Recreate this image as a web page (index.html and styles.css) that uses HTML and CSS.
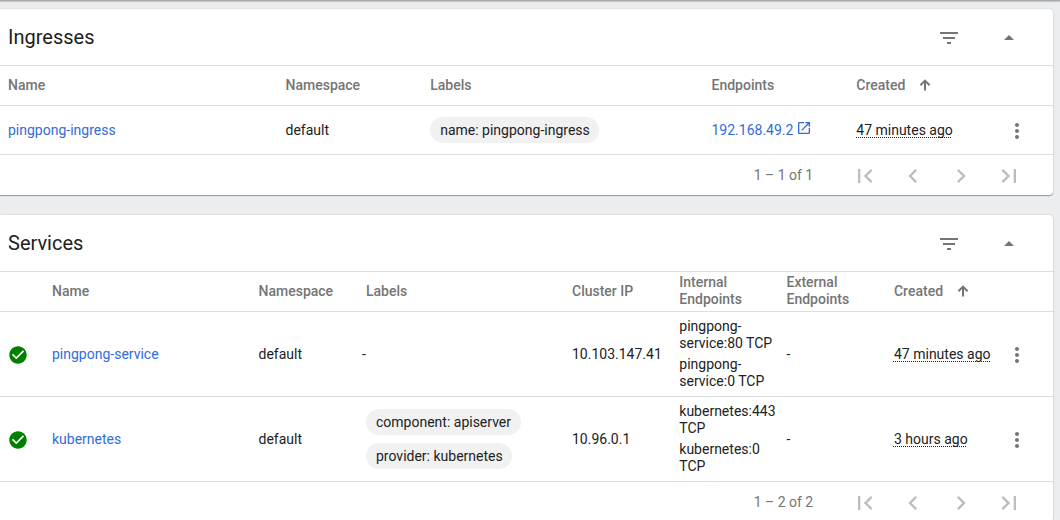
FILE: index.html
```html
<!DOCTYPE html>
<html lang="en">
<head>
<meta charset="utf-8">
<title>Ingresses and Services</title>
<link rel="stylesheet" href="styles.css">
</head>
<body>
<svg class="sprite" width="0" height="0">
  <symbol id="filter" viewBox="0 0 24 24"><path d="M10 18h4v-2h-4v2zM3 6v2h18V6H3zm3 7h12v-2H6v2z"/></symbol>
  <symbol id="up" viewBox="0 0 24 24"><path d="M7 14l5-5 5 5z"/></symbol>
  <symbol id="more" viewBox="0 0 24 24"><path d="M12 8c1.1 0 2-.9 2-2s-.9-2-2-2-2 .9-2 2 .9 2 2 2zm0 2c-1.1 0-2 .9-2 2s.9 2 2 2 2-.9 2-2-.9-2-2-2zm0 6c-1.1 0-2 .9-2 2s.9 2 2 2 2-.9 2-2-.9-2-2-2z"/></symbol>
  <symbol id="first" viewBox="0 0 24 24"><path d="M18.41 16.59L13.82 12l4.59-4.59L17 6l-6 6 6 6zM6 6h2v12H6z"/></symbol>
  <symbol id="prev" viewBox="0 0 24 24"><path d="M15.41 7.41L14 6l-6 6 6 6 1.41-1.41L10.83 12z"/></symbol>
  <symbol id="next" viewBox="0 0 24 24"><path d="M10 6L8.59 7.41 13.17 12l-4.58 4.59L10 18l6-6z"/></symbol>
  <symbol id="last" viewBox="0 0 24 24"><path d="M5.59 7.41L10.18 12l-4.59 4.59L7 18l6-6-6-6zM16 6h2v12h-2z"/></symbol>
  <symbol id="open" viewBox="0 0 24 24"><path d="M19 19H5V5h7V3H5c-1.11 0-2 .9-2 2v14c0 1.1.89 2 2 2h14c1.1 0 2-.9 2-2v-7h-2v7zM14 3v2h3.590l-9.830 9.830 1.410 1.410L19 6.410V10h2V3h-7z"/></symbol>
  <symbol id="check" viewBox="0.5 0.5 23 23"><path d="M12 2C6.480 2 2 6.480 2 12s4.480 10 10 10 10-4.480 10-10S17.520 2 12 2zm-2 15l-5-5 1.410-1.410L10 14.170l7.590-7.590L19 8l-9 9z"/></symbol>
  <symbol id="sort" viewBox="0 0 12 12"><path d="M5 11.500V4L2.100 6.900.7 5.500 6 .2l5.300 5.300-1.400 1.400L7 4v7.500z"/></symbol>
</svg>
<div class="toolbar-edge"></div>
<main class="content">
  <section class="card">
    <header class="card-header">
      <h2 class="card-title">Ingresses</h2>
      <svg class="icon filter-icon"><use href="#filter"/></svg>
      <svg class="icon"><use href="#up"/></svg>
    </header>
    <div class="row head ingress-row">
      <div>Name</div><div>Namespace</div><div>Labels</div><div>Endpoints</div>
      <div class="sorted">Created<svg class="sort-icon"><use href="#sort"/></svg></div><div></div>
    </div>
    <div class="row ingress-row ingress-body">
      <div><a class="link">pingpong-ingress</a></div>
      <div>default</div>
      <div class="chips"><span class="chip">name: pingpong-ingress</span></div>
      <div class="endpoint"><a class="link">192.168.49.2</a><svg class="open-icon"><use href="#open"/></svg></div>
      <div><span class="age">47 minutes ago</span></div>
      <svg class="icon menu-icon"><use href="#more"/></svg>
    </div>
    <footer class="paginator">
      <span class="range">1 – 1 of 1</span>
      <svg class="page-icon"><use href="#first"/></svg>
      <svg class="page-icon"><use href="#prev"/></svg>
      <svg class="page-icon"><use href="#next"/></svg>
      <svg class="page-icon"><use href="#last"/></svg>
    </footer>
  </section>

  <section class="card">
    <header class="card-header">
      <h2 class="card-title">Services</h2>
      <svg class="icon filter-icon"><use href="#filter"/></svg>
      <svg class="icon"><use href="#up"/></svg>
    </header>
    <div class="row head service-row">
      <div></div><div>Name</div><div>Namespace</div><div>Labels</div><div>Cluster IP</div>
      <div class="two-line">Internal<br>Endpoints</div><div class="two-line">External<br>Endpoints</div>
      <div class="sorted">Created<svg class="sort-icon"><use href="#sort"/></svg></div><div></div>
    </div>
    <div class="row service-row service-body">
      <svg class="status-icon"><use href="#check"/></svg>
      <div><a class="link">pingpong-service</a></div>
      <div>default</div>
      <div class="no-labels">-</div>
      <div>10.103.147.41</div>
      <div class="endpoints"><div>pingpong-<br>service:80 TCP</div><div>pingpong-<br>service:0 TCP</div></div>
      <div>-</div>
      <div><span class="age">47 minutes ago</span></div>
      <svg class="icon menu-icon"><use href="#more"/></svg>
    </div>
    <div class="row service-row service-body">
      <svg class="status-icon"><use href="#check"/></svg>
      <div><a class="link">kubernetes</a></div>
      <div>default</div>
      <div class="chips"><span class="chip">component: apiserver</span><span class="chip">provider: kubernetes</span></div>
      <div>10.96.0.1</div>
      <div class="endpoints"><div>kubernetes:443<br>TCP</div><div>kubernetes:0<br>TCP</div></div>
      <div>-</div>
      <div><span class="age">3 hours ago</span></div>
      <svg class="icon menu-icon"><use href="#more"/></svg>
    </div>
    <footer class="paginator">
      <span class="range">1 – 2 of 2</span>
      <svg class="page-icon"><use href="#first"/></svg>
      <svg class="page-icon"><use href="#prev"/></svg>
      <svg class="page-icon"><use href="#next"/></svg>
      <svg class="page-icon"><use href="#last"/></svg>
    </footer>
  </section>
</main>
</body>
</html>
```
FILE: styles.css
```css
* { box-sizing: border-box; }

body {
  margin: 0;
  height: 520px;
  overflow: hidden;
  background: #ecedef;
  color: #212121;
  font: 14px/17px Roboto, sans-serif;
}

.sprite { display: none; }
svg { flex: none; fill: #757575; }

.toolbar-edge {
  height: 1px;
  background: #a9aaab;
  box-shadow: 0 1px 1px rgba(0, 0, 0, .2);
}

.content {
  display: flex;
  flex-direction: column;
  gap: 20px;
  width: 1053px;
  padding-top: 8px;
}

.card {
  flex: none;
  background: #fff;
  border-radius: 0 4px 4px 0;
  box-shadow: 0 1px 1px rgba(0, 0, 0, .34), 0 0 2px rgba(0, 0, 0, .16);
}

.card-header {
  display: flex;
  align-items: center;
  height: 56px;
  padding: 0 32px 0 8px;
}

.card-title {
  flex: 1;
  margin: 0;
  font-size: 20px;
  font-weight: 400;
  line-height: 24px;
}

.icon { width: 24px; height: 24px; margin-top: 2px; }
.filter-icon { margin-right: 36px; }

.row {
  display: grid;
  align-items: center;
  padding-left: 8px;
  border-top: 1px solid #dedede;
}

.ingress-row { grid-template-columns: 277.5px 144.7px 281.3px 144.8px 148.7px 24px; }
.service-row { grid-template-columns: 44px 206.5px 107.5px 206px 107.3px 107.2px 107.5px 111px 24px; }
.ingress-body { height: 49px; }
.service-body { height: 85px; }

.head {
  height: 40px;
  color: #757575;
  font-weight: 500;
}

.two-line { margin-top: -1px; }

.sorted { display: flex; align-items: center; }
.sort-icon { width: 12px; height: 12px; margin: -2px 0 0 14px; }

.link { color: #326cd8; }

.endpoint { display: flex; align-items: center; }
.open-icon { width: 16px; height: 16px; margin: -4px 0 0 2.7px; fill: #326cd8; }

.chips {
  display: flex;
  flex-direction: column;
  align-items: flex-start;
  gap: 8px;
}

.chip {
  padding: 5px 9.7px 4px 10px;
  border-radius: 13px;
  background: #f1f1f1;
}

.no-labels { margin-left: -4px; }

.age {
  text-decoration: underline dotted 1px;
  text-decoration-skip-ink: none;
  text-underline-offset: 2px;
}

.endpoints { display: grid; gap: 4px; }
.endpoints > div + div { padding-top: .5px; }

.status-icon { width: 20px; height: 20px; margin-top: 2px; fill: #008000; }

.paginator {
  display: flex;
  align-items: center;
  justify-content: flex-end;
  gap: 20px;
  height: 41px;
  padding-right: 30px;
  border-top: 1px solid #dedede;
  color: #757575;
}

.range { margin-right: 17.8px; }
.page-icon { width: 28px; height: 28px; margin-top: 2px; fill: #bdbdbd; }
```
